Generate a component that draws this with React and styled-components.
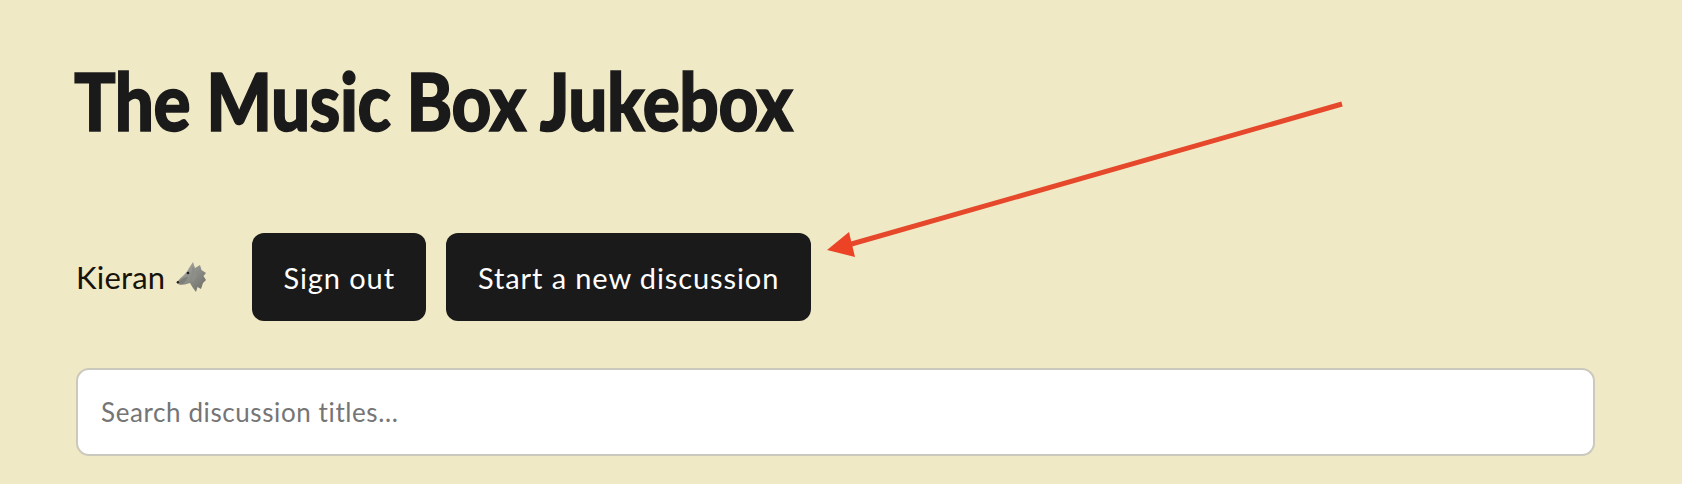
import React from 'react';
import styled, { createGlobalStyle } from 'styled-components';

const Global = createGlobalStyle`
  html, body {
    margin: 0;
    background: #f0e9c6;
  }
`;

const Page = styled.div`
  position: relative;
  box-sizing: border-box;
  width: 1682px;
  height: 484px;
  padding: 55px 87px 0 76px;
  overflow: hidden;
  font-family: 'Lato', 'Noto Sans', sans-serif;
  color: #1a1a1a;
`;

const Title = styled.h1`
  margin: 0 0 0 -2px;
  height: 90px;
  font-family: 'Lato', sans-serif;
  font-size: 80px;
  line-height: 90px;
  font-weight: 900;
  white-space: nowrap;
  letter-spacing: -0.5px;
  -webkit-text-stroke: 1.5px #1a1a1a;
  color: #1a1a1a;
  transform: scaleX(0.865);
  transform-origin: left center;
`;

const UserBar = styled.div`
  display: flex;
  align-items: center;
  margin-top: 88px;
`;

const UserName = styled.div`
  display: flex;
  align-items: center;
  gap: 11px;
  width: 176px;
  font-size: 31px;
  letter-spacing: 0.2px;
  color: #16130a;
`;

const Button = styled.button`
  height: 88px;
  margin-right: 20px;
  padding: 0 31.5px;
  border: 0;
  border-radius: 12px;
  background: #1a1a1a;
  color: #fff;
  font-family: inherit;
  font-size: 29px;
  letter-spacing: 0.9px;
`;

const Search = styled.input`
  display: block;
  box-sizing: border-box;
  width: 100%;
  height: 88px;
  margin-top: 47px;
  padding: 0 23px;
  border: 2px solid #cbc8bd;
  border-radius: 13px;
  background: #fff;
  font-family: inherit;
  font-size: 26px;
  letter-spacing: 0.6px;
  outline: none;

  &::placeholder {
    color: #757575;
    opacity: 1;
  }
`;

const ArrowLayer = styled.svg`
  position: absolute;
  left: 0;
  top: 0;
  pointer-events: none;
`;

const Wolf = () => (
  <svg width="30" height="30" viewBox="0 0 30 30">
    <defs>
      <linearGradient id="fur" x1="0" y1="0" x2="1" y2="1">
        <stop offset="0" stopColor="#b0b0ab" />
        <stop offset="1" stopColor="#6c6c67" />
      </linearGradient>
    </defs>
    <path
      d="M1 20 Q5 15 8 13 Q12 9 13 6 L17 0 L19 6 L24 3 L25.5 8 L30 11 L27.5 14 L30 18 L27 21 L25 27 L21.5 25 L20 30 L17 26 Q15 23 14 21 Q9 23 4 23 Q1 22 1 20 Z"
      fill="url(#fur)"
    />
    <path d="M2 20 Q7 15 12 15 Q10 20 7 22 Q3 22.500 2 20 Z" fill="#7f7f7a" />
    <path d="M17 4 L21 14 L17 20 Q14 14 17 4 Z" fill="#8e8e89" />
    <circle cx="1.9" cy="20.300" r="1.200" fill="#222" />
    <circle cx="12" cy="11" r="1.300" fill="#222" />
  </svg>
);

const App = () => {
  return (
    <>
      <Global />
      <Page>
        <Title>The Music Box Jukebox</Title>
        <UserBar>
          <UserName>
            Kieran <Wolf />
          </UserName>
          <Button>Sign out</Button>
          <Button>Start a new discussion</Button>
        </UserBar>
        <Search placeholder="Search discussion titles..." />
        <ArrowLayer width="1682" height="484" viewBox="0 0 1682 484">
          <line x1="1342" y1="104" x2="848" y2="245" stroke="#e5482a" strokeWidth="5" />
          <path d="M827 250 L849 232 L855 257 Z" fill="#ec4326" />
        </ArrowLayer>
      </Page>
    </>
  );
};

export default App;
